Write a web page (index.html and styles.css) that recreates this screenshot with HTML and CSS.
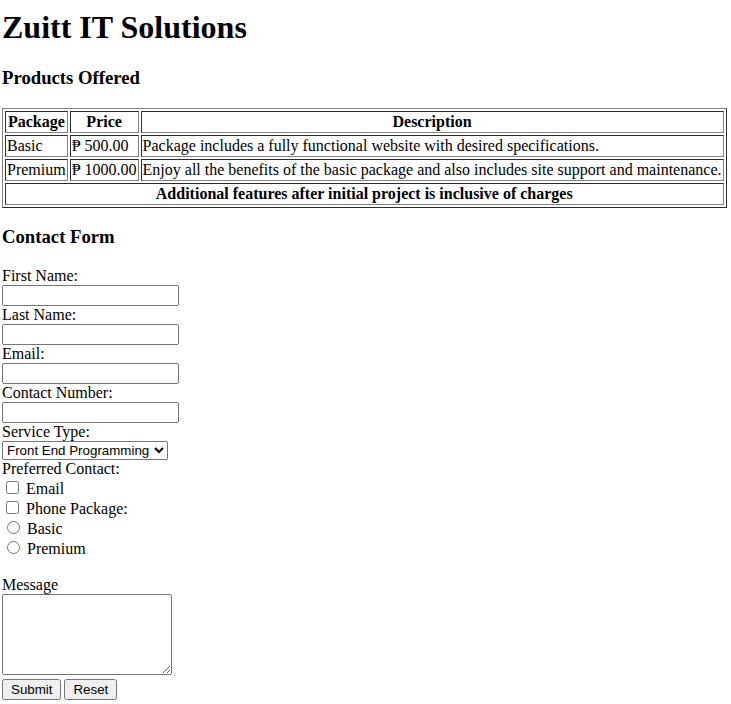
FILE: index.html
```html
<!DOCTYPE html>
<html>
<head>
<meta charset="utf-8">
<title>Zuitt IT Solutions</title>
<link rel="stylesheet" href="styles.css">
</head>
<body>
<h1 class="title">Zuitt IT Solutions</h1>
<h3 class="section">Products Offered</h3>
<table class="products" border="1">
<tr><th>Package</th><th>Price</th><th>Description</th></tr>
<tr><td>Basic</td><td>&#8369; 500.00</td><td>Package includes a fully functional website with desired specifications.</td></tr>
<tr><td>Premium</td><td>&#8369; 1000.00</td><td>Enjoy all the benefits of the basic package and also includes site support and maintenance.</td></tr>
<tr><th colspan="3">Additional features after initial project is inclusive of charges</th></tr>
</table>
<h3 class="section">Contact Form</h3>
<form class="contact">
<label>First Name:</label><br>
<input class="field" type="text"><br>
<label>Last Name:</label><br>
<input class="field" type="text"><br>
<label>Email:</label><br>
<input class="field" type="email"><br>
<label>Contact Number:</label><br>
<input class="field" type="text"><br>
<label>Service Type:</label><br>
<select class="choice"><option>Front End Programming</option><option>Back End Programming</option></select><br>
<label>Preferred Contact:</label><br>
<input class="tick" type="checkbox"> Email<br>
<input class="tick" type="checkbox"> Phone Package:<br>
<input class="tick" type="radio" name="pkg"> Basic<br>
<input class="tick" type="radio" name="pkg"> Premium<br>
<br>
<label>Message</label><br>
<textarea class="message"></textarea><br>
<button class="btn" type="submit">Submit</button><button class="btn" type="reset">Reset</button>
</form>
</body>
</html>
```
FILE: styles.css
```css
body {
  margin: 0 2px;
  font-family: "Liberation Serif", "DejaVu Serif", serif;
  font-size: 16px;
  color: #000;
  background: #fff;
}
.title {
  font-size: 32px;
  margin: 9px 0 21px;
}
.section {
  font-size: 18.72px;
  margin: 18.72px 0;
}
.products {
  border-color: #808080;
}
.products th, .products td {
  padding: 1px;
}
.contact input, .contact select, .contact textarea, .contact button {
  font-family: "Liberation Sans", Arial, sans-serif;
  font-size: 13.33px;
}
.field {
  width: 177px;
  height: 21px;
  box-sizing: border-box;
}
.choice {
  width: 166px;
  height: 19px;
  box-sizing: border-box;
}
.message {
  width: 170px;
  height: 81px;
  box-sizing: border-box;
}
.btn {
  padding: 1px 7px;
  margin-right: 3px;
}
```
